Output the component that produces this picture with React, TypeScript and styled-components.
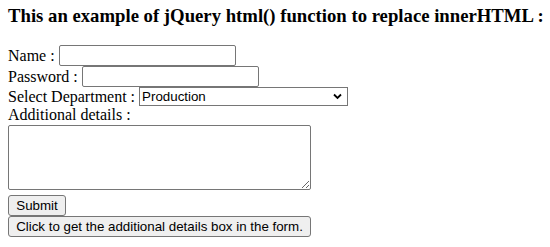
import React from "react";
import styled, { createGlobalStyle } from "styled-components";

const Global = createGlobalStyle`
  html, body { margin: 0; padding: 0; background: #ffffff; }
  body { font-family: "Liberation Serif", "Times New Roman", serif; font-size: 16px; color: #000; }
`;

const Page = styled.div`
  padding: 5px 8px 0 8px;
  display: flex;
  flex-direction: column;
  align-items: flex-start;
`;

const Heading = styled.h3`
  margin: 0 0 18.72px 0;
  font-size: 18.72px;
  font-weight: bold;
  line-height: 21.5px;
  white-space: nowrap;
`;

const Row = styled.div<{ $h: number }>`
  display: flex;
  align-items: center;
  height: ${(p) => p.$h}px;
  white-space: pre;
  line-height: 18px;
`;

const Label = styled.span`
  display: block;
`;

const TextInput = styled.input`
  box-sizing: border-box;
  width: 177px;
  height: 21px;
  margin: 0;
  padding: 1px 2px;
  border: 1px solid #767676;
  border-radius: 2px;
  background: #fff;
  font-family: "Liberation Sans", Arial, sans-serif;
  font-size: 13.33px;
`;

const SelectWrap = styled.span`
  position: relative;
  display: block;
  width: 209px;
  height: 19px;
`;

const Select = styled.select`
  box-sizing: border-box;
  width: 209px;
  height: 19px;
  margin: 0;
  padding: 0 0 0 2px;
  border: 1px solid #767676;
  border-radius: 0;
  background: #fff;
  color: #000;
  font-family: "Liberation Sans", Arial, sans-serif;
  font-size: 13.33px;
  appearance: none;
  -webkit-appearance: none;
`;

const Chevron = styled.svg`
  position: absolute;
  right: 6px;
  top: 6px;
  width: 9px;
  height: 7px;
  pointer-events: none;
`;

const TextArea = styled.textarea`
  box-sizing: border-box;
  display: block;
  width: 303px;
  height: 65px;
  margin: 1px 0 5px 0;
  padding: 2px;
  border: 1px solid #767676;
  border-radius: 2px;
  background: #fff;
  font-family: "Liberation Mono", monospace;
  font-size: 13.33px;
`;

const Button = styled.button<{ $w: number }>`
  box-sizing: border-box;
  width: ${(p) => p.$w}px;
  height: 21px;
  margin: 0;
  padding: 0 6px;
  border: 1px solid #767676;
  border-radius: 3px;
  background: #efefef;
  color: #000;
  font-family: "Liberation Sans", Arial, sans-serif;
  font-size: 13.33px;
  line-height: 15px;
  white-space: nowrap;
  text-align: center;
`;

export default function App() {
  return (
    <>
      <Global />
      <Page>
        <Heading>This an example of jQuery html() function to replace innerHTML :</Heading>
        <Row $h={21}>
          <Label>Name : </Label>
          <TextInput type="text" />
        </Row>
        <Row $h={21}>
          <Label>Password : </Label>
          <TextInput type="password" />
        </Row>
        <Row $h={19}>
          <Label>Select Department : </Label>
          <SelectWrap>
            <Select defaultValue="Production">
              <option>Production</option>
              <option>Marketing</option>
              <option>Finance</option>
            </Select>
            <Chevron viewBox="0 0 9 7">
              <path d="M1 1.5 L4.5 5 L8 1.5" fill="none" stroke="#000" strokeWidth="1.8" />
            </Chevron>
          </SelectWrap>
        </Row>
        <Row $h={18}>
          <Label>Additional details :</Label>
        </Row>
        <TextArea />
        <Button $w={58}>Submit</Button>
        <Button $w={303}>Click to get the additional details box in the form.</Button>
      </Page>
    </>
  );
}
